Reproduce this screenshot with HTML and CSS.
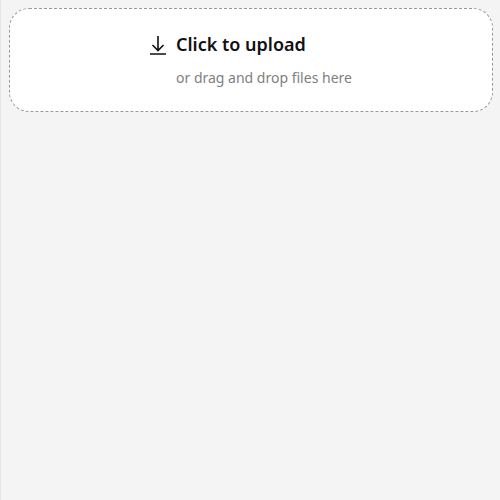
FILE: index.html
```html
<!DOCTYPE html>
<html lang="en">
<head>
<meta charset="utf-8">
<title>Upload</title>
<link rel="stylesheet" href="styles.css">
</head>
<body>
<button class="upload" type="button">
  <svg class="upload-icon" viewBox="0 0 20 20" aria-hidden="true"><path d="M10 1v14.500M4.500 10l5.500 5.500 5.500-5.500M2 19h16"/></svg>
  <span class="upload-text">
    <span class="upload-title">Click to upload</span>
    <span class="upload-hint">or drag and drop files here</span>
  </span>
</button>
</body>
</html>
```
FILE: styles.css
```css
* {
  box-sizing: border-box;
}

body {
  margin: 0;
  min-height: 100vh;
  padding: 8px 7px 8px 8px;
  border-left: 1px solid #e6e6e6;
  background: #f4f4f4;
  font-family: "Noto Sans", sans-serif;
}

.upload {
  display: flex;
  justify-content: center;
  gap: 8px;
  width: 100%;
  padding: 21px 24px 23px;
  border: 1px dashed #999;
  border-radius: 20px;
  background: #fff;
  color: #111;
  font-family: inherit;
  text-align: left;
  cursor: pointer;
}

.upload-icon {
  width: 20px;
  height: 20px;
  margin-top: 5px;
  fill: none;
  stroke: currentColor;
  stroke-width: 1.6;
}

.upload-text {
  display: flex;
  flex-direction: column;
  gap: 10px;
  min-width: 178px;
}

.upload-title {
  font-size: 18px;
  font-weight: 600;
  line-height: 28px;
}

.upload-hint {
  color: #808080;
  font-size: 14px;
  line-height: 20px;
}
```
